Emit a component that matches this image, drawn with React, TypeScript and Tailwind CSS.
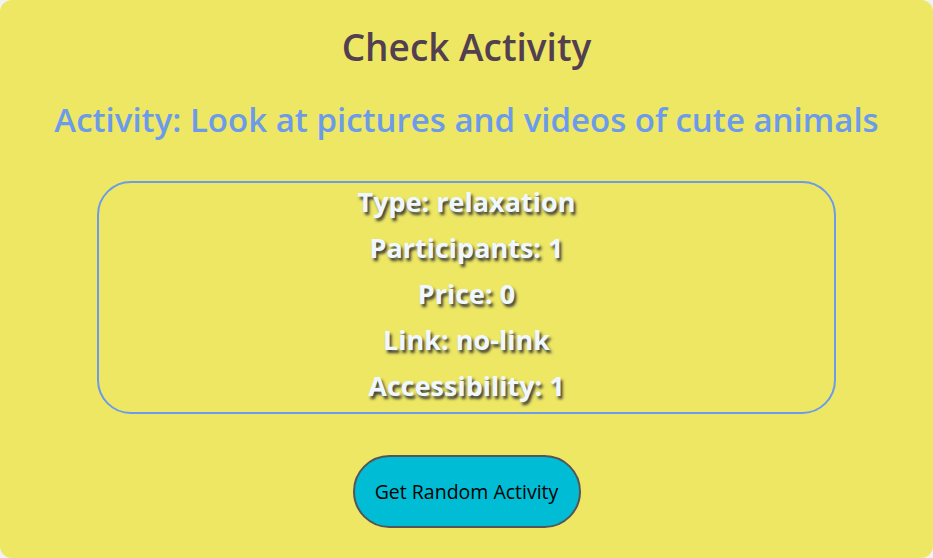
import { useState } from 'react';

const activity = {
  activity: 'Look at pictures and videos of cute animals',
  type: 'relaxation',
  participants: 1,
  price: 0,
  link: 'no-link',
  accessibility: 1,
};

export default function App() {
  const [data] = useState(activity);

  return (
    <div className="min-h-screen bg-[#f2f2f2]" style={{ fontFamily: '"Open Sans", "Noto Sans", sans-serif' }}>
      <div className="h-[558px] bg-[#ede764] rounded-[12px] flex flex-col items-center">
        <h1 className="mt-[24px] text-[37px] leading-[46px] font-semibold text-[#523f4f]">Check Activity</h1>
        <h2 className="mt-[30px] text-[33px] leading-[40px] font-semibold text-[#6b9bea]">
          Activity: {data.activity}
        </h2>
        <div className="mt-[41px] w-[739px] h-[233px] border-2 border-[#6b9bea] rounded-[34px] flex flex-col items-center text-[27px] leading-[46px] font-bold text-[#f0f8ff] [text-shadow:2px_3px_3px_#3a3a3a]">
          <div className="-mt-[4px] flex flex-col items-center">
            <p>Type: {data.type}</p>
            <p>Participants: {data.participants}</p>
            <p>Price: {data.price}</p>
            <p>Link: {data.link}</p>
            <p>Accessibility: {data.accessibility}</p>
          </div>
        </div>
        <button className="mt-[41px] w-[228px] h-[73px] rounded-full bg-[#00bcd4] border-2 border-[#555] text-[19.5px] text-black">
          Get Random Activity
        </button>
      </div>
    </div>
  );
}
